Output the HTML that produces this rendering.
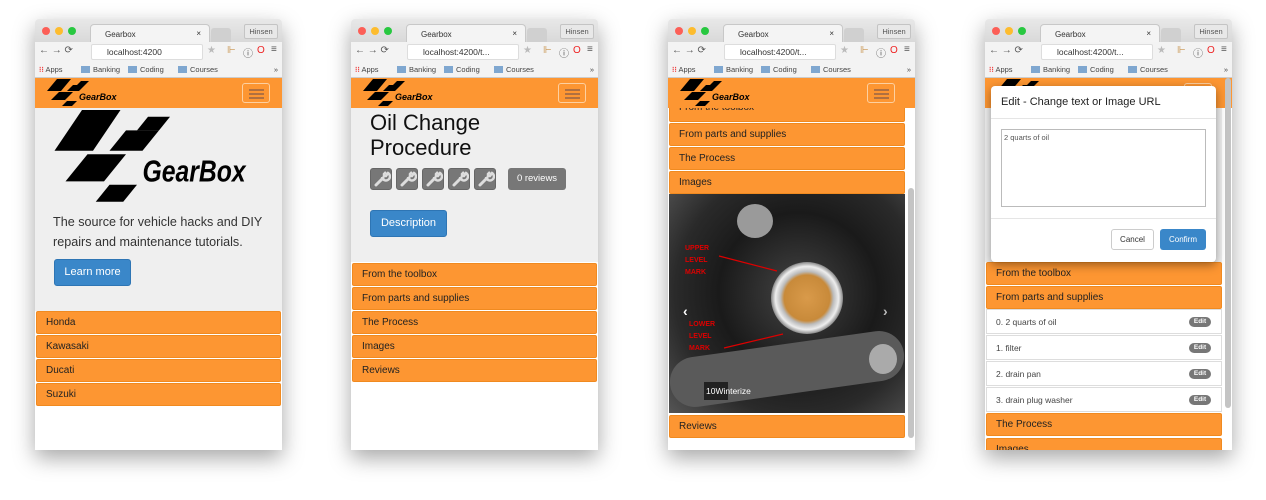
<!DOCTYPE html>
<html><head><meta charset="utf-8"><style>
*{box-sizing:border-box;margin:0;padding:0}
body{width:1266px;height:500px;background:#fff;position:relative;overflow:hidden;font-family:"Liberation Sans",sans-serif}
.win{position:absolute;top:19px;width:247px;height:431px;background:#fff;box-shadow:0 8px 22px rgba(0,0,0,.35);overflow:hidden;border-radius:4px 4px 0 0}
.tabbar{position:absolute;left:0;top:0;width:100%;height:23px;background:linear-gradient(#e8e8e8,#d9d9d9)}
.dot{position:absolute;top:8px;width:8px;height:8px;border-radius:50%}
.tab{position:absolute;left:55px;top:5px;width:120px;height:18px;background:#f4f4f4;border:1px solid #c8c8c8;border-bottom:none;border-radius:4px 4px 0 0;font-size:8px;color:#333;padding:5px 0 0 14px}
.tab2{position:absolute;left:176px;top:9px;width:20px;height:14px;background:#d0d0d0;border-radius:3px 3px 0 0}
.user{position:absolute;right:4px;top:5px;width:34px;height:15px;border:1px solid #c4c4c4;border-radius:2px;font-size:7.5px;color:#555;text-align:center;line-height:13px;background:#e8e8e8}
.tool{position:absolute;top:23px;left:0;width:100%;height:20px;background:#f3f3f3;font-size:10px;color:#555}
.url{position:absolute;left:56px;top:2px;width:112px;height:16px;background:#fff;border:1px solid #ddd;border-radius:2px;font-size:8.5px;padding:2px 0 0 15px;color:#333}
.bm{position:absolute;top:43px;left:0;width:100%;height:16px;background:#f3f3f3;border-bottom:1px solid #ccc;font-size:7.5px;color:#444}
.bm span{position:absolute;top:3px}
.fold{display:inline-block;width:9px;height:7px;background:#7fa7d0;margin-right:3px;vertical-align:-1px}
.nav{position:absolute;top:59px;left:0;width:100%;height:30px;background:#fd9632}
.burg{position:absolute;right:12px;top:5px;width:28px;height:20px;border:1px solid #fdd0a0;border-radius:3px}
.burg i{position:absolute;left:6px;width:15px;height:1.5px;background:#b07040}
.content{position:absolute;top:89px;left:0;width:100%;bottom:0;background:#efefef}
.it{position:absolute;left:1px;right:1px;height:23px;background:#fd9632;border:1px solid #f08a20;border-radius:2px;font-size:10px;color:#222;padding:5px 0 0 9px}
.row{position:absolute;left:1px;right:1px;height:25px;background:#fff;border:1px solid #ddd;font-size:8.5px;color:#444;padding:7px 0 0 9px}
.edit{position:absolute;right:10px;top:7px;width:22px;height:10px;border-radius:5px;background:#777;color:#fff;font-size:6.5px;font-weight:bold;text-align:center;line-height:10px}
.wr{position:absolute;top:0;width:22px;height:22px;background:#777;border-radius:3px;border:1px solid #666}
</style></head><body>

<svg width="0" height="0" style="position:absolute"><defs>
<g id="lg"><polygon points="12,0 26,0 16,12 2,12" fill="#000"/><polygon points="36,2 44,2 40,6 32,6" fill="#000"/><polygon points="28,6 40,6 34,12 22,12" fill="#000"/><polygon points="14,13 28,13 20,21 6,21" fill="#000"/><polygon points="22,22 32,22 27,27 17,27" fill="#000"/><text x="34" y="21" font-family="Liberation Sans" font-weight="bold" font-style="italic" font-size="9" fill="#000">GearBox</text></g>
<g id="wr"><path d="M5 16 L12 9" stroke="#ddd" stroke-width="3" stroke-linecap="round"/><path d="M11 8 A4 4 0 1 0 17 4 L15 7 L13 7 L13 5 L15 3" fill="none" stroke="#ddd" stroke-width="2.5"/></g>
</defs></svg>

<!-- WINDOW 1 -->
<div class="win" style="left:35px">
 <div class="tabbar"><div class="dot" style="left:7px;background:#fc5f57"></div><div class="dot" style="left:20px;background:#fdbc2e"></div><div class="dot" style="left:33px;background:#28c840"></div>
 <div class="tab">Gearbox<span style="position:absolute;right:8px;top:4px">×</span></div><div class="tab2"></div><div class="user">Hinsen</div></div>
 <div class="tool"><span style="position:absolute;left:4px;top:3px">← → ⟳</span><div class="url">localhost:4200</div><span style="position:absolute;left:172px;top:3px;color:#bbb">★</span><span style="position:absolute;left:192px;top:3px;color:#c8924a">⊩</span><span style="position:absolute;left:208px;top:3px">ⓘ</span><span style="position:absolute;left:222px;top:3px;color:#e22">O</span><span style="position:absolute;left:236px;top:2px">≡</span></div>
 <div class="bm"><span style="left:4px"><b style="color:#e44">⁝⁝</b> Apps</span><span style="left:46px"><i class="fold"></i>Banking</span><span style="left:93px"><i class="fold"></i>Coding</span><span style="left:143px"><i class="fold"></i>Courses</span><span style="right:4px">»</span></div>
 <div class="nav"><svg style="position:absolute;left:10px;top:1px" width="80" height="28"><use href="#lg"/></svg><div class="burg"><i style="top:5px"></i><i style="top:9px"></i><i style="top:13px"></i></div></div>
 <div class="content">
  <svg style="position:absolute;left:14px;top:2px" width="225" height="95"><g transform="scale(2.75,3.4)"><use href="#lg"/></g></svg>
  <div style="position:absolute;left:18px;top:104px;width:230px;font-size:12.6px;line-height:20px;color:#333;white-space:nowrap">The source for vehicle hacks and DIY<br>repairs and maintenance tutorials.</div>
  <div style="position:absolute;left:19px;top:151px;width:77px;height:27px;background:#3a87c9;border:1px solid #2e75b4;border-radius:3px;color:#fff;font-size:11px;text-align:center;line-height:25px">Learn more</div>
  <div style="position:absolute;left:0;right:0;top:203px;bottom:0;background:#fff"></div>
  <div class="it" style="top:203px">Honda</div><div class="it" style="top:227px">Kawasaki</div><div class="it" style="top:251px">Ducati</div><div class="it" style="top:275px">Suzuki</div>
 </div>
</div>

<!-- WINDOW 2 -->
<div class="win" style="left:351px">
 <div class="tabbar"><div class="dot" style="left:7px;background:#fc5f57"></div><div class="dot" style="left:20px;background:#fdbc2e"></div><div class="dot" style="left:33px;background:#28c840"></div>
 <div class="tab">Gearbox<span style="position:absolute;right:8px;top:4px">×</span></div><div class="tab2"></div><div class="user">Hinsen</div></div>
 <div class="tool"><span style="position:absolute;left:4px;top:3px">← → ⟳</span><div class="url">localhost:4200/t...</div><span style="position:absolute;left:172px;top:3px;color:#bbb">★</span><span style="position:absolute;left:192px;top:3px;color:#c8924a">⊩</span><span style="position:absolute;left:208px;top:3px">ⓘ</span><span style="position:absolute;left:222px;top:3px;color:#e22">O</span><span style="position:absolute;left:236px;top:2px">≡</span></div>
 <div class="bm"><span style="left:4px"><b style="color:#e44">⁝⁝</b> Apps</span><span style="left:46px"><i class="fold"></i>Banking</span><span style="left:93px"><i class="fold"></i>Coding</span><span style="left:143px"><i class="fold"></i>Courses</span><span style="right:4px">»</span></div>
 <div class="nav"><svg style="position:absolute;left:10px;top:1px" width="80" height="28"><use href="#lg"/></svg><div class="burg"><i style="top:5px"></i><i style="top:9px"></i><i style="top:13px"></i></div></div>
 <div class="content">
  <div style="position:absolute;left:19px;top:2px;font-size:22px;line-height:25px;color:#111">Oil Change<br>Procedure</div>
  <div style="position:absolute;left:19px;top:60px;width:130px;height:22px">
   <div class="wr" style="left:0"><svg width="20" height="20"><use href="#wr"/></svg></div><div class="wr" style="left:26px"><svg width="20" height="20"><use href="#wr"/></svg></div><div class="wr" style="left:52px"><svg width="20" height="20"><use href="#wr"/></svg></div><div class="wr" style="left:78px"><svg width="20" height="20"><use href="#wr"/></svg></div><div class="wr" style="left:104px"><svg width="20" height="20"><use href="#wr"/></svg></div>
  </div>
  <div style="position:absolute;left:157px;top:60px;width:58px;height:22px;background:#777;border-radius:3px;color:#fff;font-size:9.5px;text-align:center;line-height:22px">0 reviews</div>
  <div style="position:absolute;left:19px;top:102px;width:77px;height:27px;background:#3a87c9;border:1px solid #2e75b4;border-radius:3px;color:#fff;font-size:11px;text-align:center;line-height:25px">Description</div>
  <div style="position:absolute;left:0;right:0;top:154px;bottom:0;background:#fff"></div>
  <div class="it" style="top:155px">From the toolbox</div><div class="it" style="top:179px">From parts and supplies</div><div class="it" style="top:203px">The Process</div><div class="it" style="top:227px">Images</div><div class="it" style="top:251px">Reviews</div>
 </div>
</div>

<!-- WINDOW 3 -->
<div class="win" style="left:668px">
 <div class="tabbar"><div class="dot" style="left:7px;background:#fc5f57"></div><div class="dot" style="left:20px;background:#fdbc2e"></div><div class="dot" style="left:33px;background:#28c840"></div>
 <div class="tab">Gearbox<span style="position:absolute;right:8px;top:4px">×</span></div><div class="tab2"></div><div class="user">Hinsen</div></div>
 <div class="tool"><span style="position:absolute;left:4px;top:3px">← → ⟳</span><div class="url">localhost:4200/t...</div><span style="position:absolute;left:172px;top:3px;color:#bbb">★</span><span style="position:absolute;left:192px;top:3px;color:#c8924a">⊩</span><span style="position:absolute;left:208px;top:3px">ⓘ</span><span style="position:absolute;left:222px;top:3px;color:#e22">O</span><span style="position:absolute;left:236px;top:2px">≡</span></div>
 <div class="bm"><span style="left:4px"><b style="color:#e44">⁝⁝</b> Apps</span><span style="left:46px"><i class="fold"></i>Banking</span><span style="left:93px"><i class="fold"></i>Coding</span><span style="left:143px"><i class="fold"></i>Courses</span><span style="right:4px">»</span></div>
 <div class="content" style="background:#fff">
  <div class="it" style="top:-9px;right:10px;padding-top:2px">From the toolbox</div>
  <div class="it" style="top:15px;right:10px">From parts and supplies</div>
  <div class="it" style="top:39px;right:10px">The Process</div>
  <div class="it" style="top:63px;right:10px">Images</div>
  <div style="position:absolute;left:1px;top:86px;width:236px;height:219px;overflow:hidden;background:radial-gradient(circle at 55% 45%,#444 0,#1a1a1a 45%,#2a2a2a 70%,#555 100%)">
   <div style="position:absolute;left:0;top:150px;width:236px;height:50px;background:#5a5a5a;border-radius:30px;transform:rotate(-8deg)"></div>
   <div style="position:absolute;left:102px;top:68px;width:72px;height:72px;border-radius:50%;background:radial-gradient(circle,#d99a4a 0,#c88a3a 45%,#bbb 52%,#eee 62%,#555 75%,#333 100%)"></div>
   <div style="position:absolute;left:68px;top:10px;width:36px;height:34px;border-radius:50%;background:#9a9a9a"></div>
   <div style="position:absolute;left:200px;top:150px;width:28px;height:30px;border-radius:50%;background:#aaa"></div>
   <svg style="position:absolute;left:0;top:0" width="236" height="219"><line x1="50" y1="62" x2="108" y2="77" stroke="#d00" stroke-width="1.2"/><line x1="55" y1="154" x2="114" y2="140" stroke="#d00" stroke-width="1.2"/>
   <text x="16" y="56" fill="#d00" font-size="7" font-weight="bold">UPPER</text><text x="16" y="68" fill="#d00" font-size="7" font-weight="bold">LEVEL</text><text x="16" y="80" fill="#d00" font-size="7" font-weight="bold">MARK</text>
   <text x="20" y="132" fill="#d00" font-size="7" font-weight="bold">LOWER</text><text x="20" y="144" fill="#d00" font-size="7" font-weight="bold">LEVEL</text><text x="20" y="156" fill="#d00" font-size="7" font-weight="bold">MARK</text>
   <text x="14" y="122" fill="#fff" font-size="14" font-weight="bold">‹</text><text x="214" y="122" fill="#bbb" font-size="14" font-weight="bold">›</text></svg>
   <div style="position:absolute;left:35px;top:188px;width:24px;height:18px;background:#222"></div>
   <div style="position:absolute;left:37px;top:192px;font-size:8.5px;color:#fff">10Winterize</div>
  </div>
  <div class="it" style="top:307px;right:10px">Reviews</div>
  <div style="position:absolute;right:1px;top:80px;width:6px;height:250px;background:#c4c4c4;border-radius:3px"></div>
 </div>
 <div class="nav"><svg style="position:absolute;left:10px;top:1px" width="80" height="28"><use href="#lg"/></svg><div class="burg" style="right:20px"><i style="top:5px"></i><i style="top:9px"></i><i style="top:13px"></i></div></div>
</div>

<!-- WINDOW 4 -->
<div class="win" style="left:985px">
 <div class="tabbar"><div class="dot" style="left:7px;background:#fc5f57"></div><div class="dot" style="left:20px;background:#fdbc2e"></div><div class="dot" style="left:33px;background:#28c840"></div>
 <div class="tab">Gearbox<span style="position:absolute;right:8px;top:4px">×</span></div><div class="tab2"></div><div class="user">Hinsen</div></div>
 <div class="tool"><span style="position:absolute;left:4px;top:3px">← → ⟳</span><div class="url">localhost:4200/t...</div><span style="position:absolute;left:172px;top:3px;color:#bbb">★</span><span style="position:absolute;left:192px;top:3px;color:#c8924a">⊩</span><span style="position:absolute;left:208px;top:3px">ⓘ</span><span style="position:absolute;left:222px;top:3px;color:#e22">O</span><span style="position:absolute;left:236px;top:2px">≡</span></div>
 <div class="bm"><span style="left:4px"><b style="color:#e44">⁝⁝</b> Apps</span><span style="left:46px"><i class="fold"></i>Banking</span><span style="left:93px"><i class="fold"></i>Coding</span><span style="left:143px"><i class="fold"></i>Courses</span><span style="right:4px">»</span></div>
 <div class="nav"><svg style="position:absolute;left:10px;top:1px" width="80" height="28"><use href="#lg"/></svg><div class="burg" style="right:20px"><i style="top:5px"></i><i style="top:9px"></i><i style="top:13px"></i></div></div>
 <div class="content" style="background:#fff">
  <div style="position:absolute;left:0;right:10px;top:0;height:154px;background:#efefef"></div>
  <div class="it" style="top:154px;right:10px">From the toolbox</div>
  <div class="it" style="top:178px;right:10px">From parts and supplies</div>
  <div class="row" style="top:201px;right:10px">0. 2 quarts of oil<span class="edit">Edit</span></div>
  <div class="row" style="top:227px;right:10px">1. filter<span class="edit">Edit</span></div>
  <div class="row" style="top:253px;right:10px">2. drain pan<span class="edit">Edit</span></div>
  <div class="row" style="top:279px;right:10px">3. drain plug washer<span class="edit">Edit</span></div>
  <div class="it" style="top:305px;right:10px">The Process</div>
  <div class="it" style="top:330px;right:10px;height:30px">Images</div>
  <div style="position:absolute;right:1px;top:-30px;width:6px;height:330px;background:#c4c4c4;border-radius:3px"></div>
 </div>
 <div style="position:absolute;left:6px;top:67px;width:225px;height:176px;background:#fff;border-radius:4px;box-shadow:0 3px 10px rgba(0,0,0,.4)">
  <div style="position:absolute;left:10px;top:10px;font-size:11px;color:#222">Edit - Change text or Image URL</div>
  <div style="position:absolute;left:0;right:0;top:32px;border-top:1px solid #e5e5e5"></div>
  <div style="position:absolute;left:10px;top:43px;width:205px;height:78px;border:1px solid #bbb;font-size:7.5px;color:#555;padding:3px 2px">2 quarts of oil</div>
  <div style="position:absolute;left:0;right:0;top:132px;border-top:1px solid #e5e5e5"></div>
  <div style="position:absolute;left:120px;top:143px;width:43px;height:21px;border:1px solid #ccc;border-radius:3px;font-size:8px;color:#333;text-align:center;line-height:19px">Cancel</div>
  <div style="position:absolute;left:169px;top:143px;width:46px;height:21px;background:#3a87c9;border-radius:3px;font-size:8px;color:#fff;text-align:center;line-height:21px">Confirm</div>
 </div>
</div>
</body></html>
